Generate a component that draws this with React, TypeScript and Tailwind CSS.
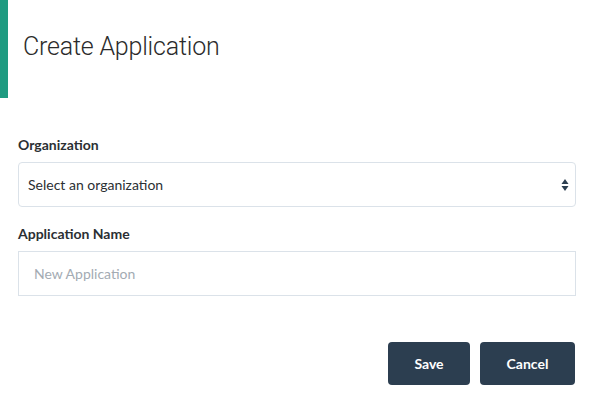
export default function App() {
  return (
    <div className="w-[594px] h-[402px] bg-white" style={{ fontFamily: '"Source Sans Pro", Lato, "Open Sans", sans-serif' }}>
      {/* Header */}
      <div className="flex h-[98px]">
        <div className="w-[8px] bg-[#1f9b81]" />
        <h1
          className="pl-[15px] pt-[33px] text-[25px] font-light leading-[28px] text-[#2b2b2b] tracking-[-0.2px]"
          style={{ fontFamily: '"Helvetica Neue", Roboto, "Liberation Sans", sans-serif' }}
        >
          Create Application
        </h1>
      </div>

      {/* Form */}
      <div className="px-[18px] pt-[38px]">
        <label className="block text-[14px] font-bold leading-[18px] text-[#2b2f33]">Organization</label>
        <div className="relative mt-[8px] h-[45px] rounded-[4px] border border-[#dbe2e9] bg-white">
          <div className="flex h-full items-center pl-[9px] text-[14px] text-[#2b2f33]">Select an organization</div>
          <svg className="absolute right-[6px] top-[15px]" width="8" height="14" viewBox="0 0 8 14">
            <path d="M4 1 L7.5 6 H0.5 Z" fill="#2c3e50" />
            <path d="M0.5 8 H7.5 L4 13 Z" fill="#2c3e50" />
          </svg>
        </div>

        <label className="mt-[18px] block text-[14px] font-bold leading-[18px] text-[#2b2f33]">Application Name</label>
        <div className="mt-[8px] flex h-[45px] items-center border border-[#dbe2e9] bg-white pl-[15px] text-[14px] text-[#a3abb3]">
          New Application
        </div>

        <div className="mt-[46px] flex justify-end gap-[10px] pr-[1px]">
          <button className="h-[43px] w-[82px] rounded-[4px] bg-[#2c3e50] text-[14px] font-bold text-white">Save</button>
          <button className="h-[43px] w-[95px] rounded-[4px] bg-[#2c3e50] text-[14px] font-bold text-white">Cancel</button>
        </div>
      </div>
    </div>
  );
}
